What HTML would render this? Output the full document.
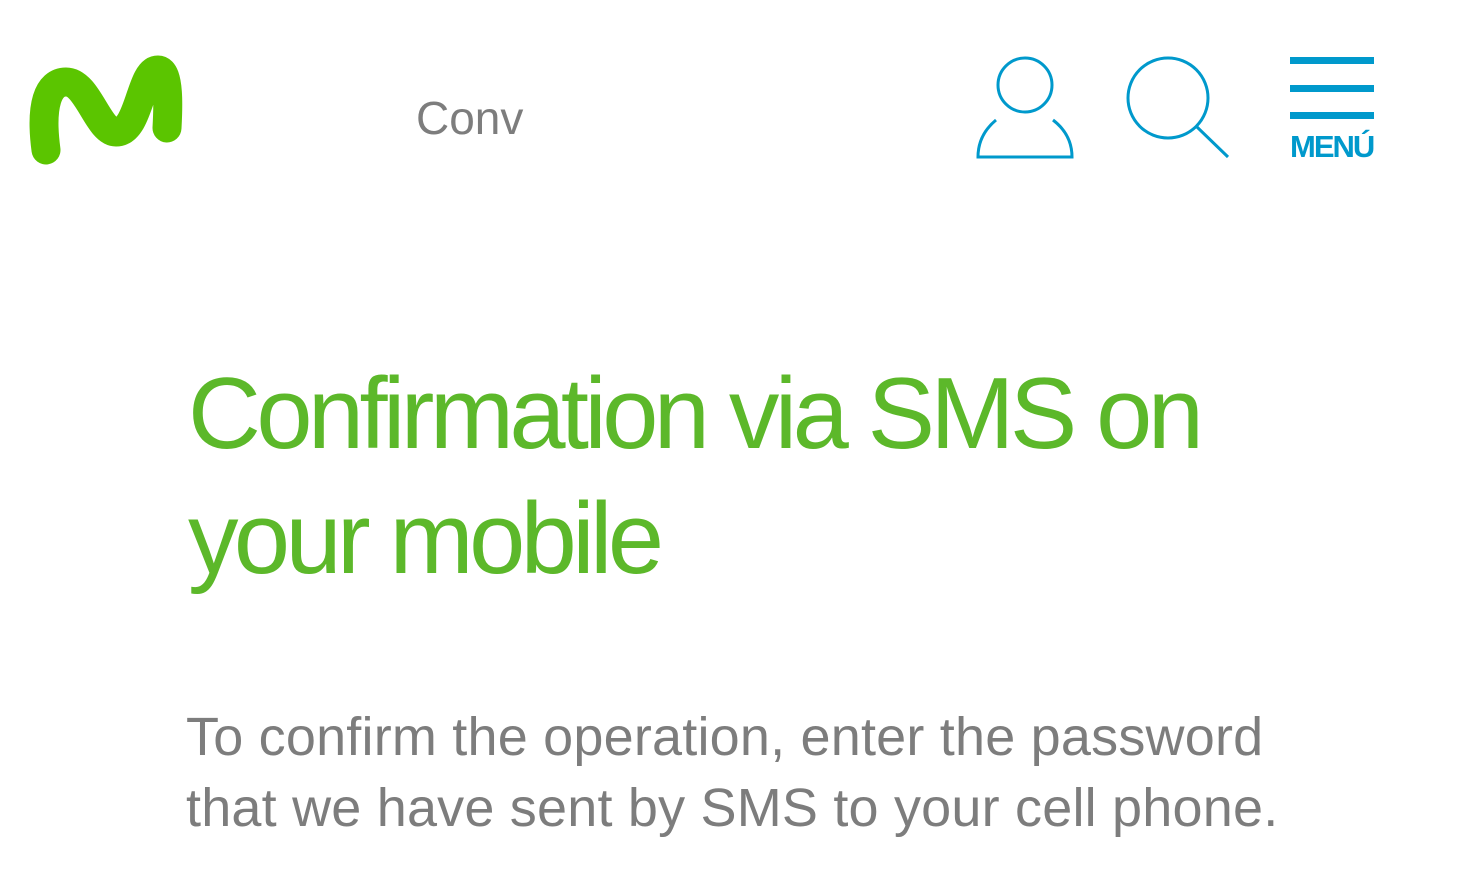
<!DOCTYPE html>
<html><head><meta charset="utf-8"><style>
html,body{margin:0;padding:0;background:#fff;width:1457px;height:869px;overflow:hidden;position:relative;font-family:"Liberation Sans",sans-serif}
.conv{position:absolute;left:416px;top:95px;font-size:46px;color:#7d7d7d;line-height:1}
h1{position:absolute;left:188px;top:352px;margin:0;font-weight:normal;color:#5cb82a;font-size:101px;line-height:125px;letter-spacing:-4.6px}
p{position:absolute;left:186px;top:702px;margin:0;color:#7d7d7d;font-size:54px;line-height:71px;letter-spacing:0.2px}
.menu{position:absolute;left:1290px;top:129px;font-size:31px;font-weight:bold;color:#0099cc;letter-spacing:-2px}
</style></head><body>
<svg style="position:absolute;left:0;top:0" width="1457" height="200">
<path d="M46,150 C40,105 48,82 66,82 C88,82 98,132 116,132 C140,132 140,70 158,70 C170,70 168,110 167,128" fill="none" stroke="#5bc500" stroke-width="29" stroke-linecap="round" stroke-linejoin="round"/>
<g fill="none" stroke="#0099cc" stroke-width="3">
<circle cx="1025" cy="85" r="27"/>
<path d="M996,120 C984,130 978,142 978,157 L1072,157 C1072,142 1066,130 1053,120"/>
<circle cx="1168" cy="98" r="40"/>
<path d="M1197,127 L1228,157"/>
</g>
<g fill="#0099cc">
<rect x="1290" y="57" width="84" height="7"/>
<rect x="1290" y="85" width="84" height="7"/>
<rect x="1290" y="112" width="84" height="7"/>
</g>
</svg>
<div class="conv">Conv</div>
<div class="menu">MENÚ</div>
<h1>Confirmation via SMS on<br>your mobile</h1>
<p>To confirm the operation, enter the password<br>that we have sent by SMS to your cell phone.</p>
</body></html>
